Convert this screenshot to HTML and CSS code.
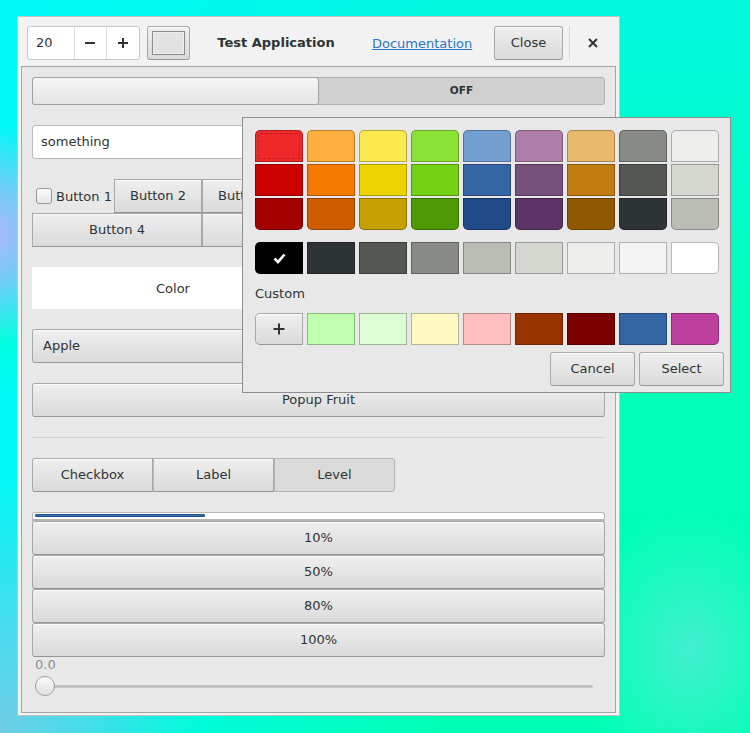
FILE: index.html
```html
<!DOCTYPE html>
<html>
<head>
<meta charset="utf-8">
<link rel="stylesheet" href="styles.css">
</head>
<body>
<div class="window">
  <header class="titlebar">
    <div class="spin">
      <span class="spin-val">20</span>
      <span class="spin-btn"><svg width="12" height="12" viewBox="0 0 12 12"><path d="M1 6h10" stroke="#2e3436" stroke-width="2"/></svg></span>
      <span class="spin-btn"><svg width="12" height="12" viewBox="0 0 12 12"><path d="M1 6h10M6 1v10" stroke="#2e3436" stroke-width="2"/></svg></span>
    </div>
    <div class="btn colorbtn"><span class="colorbtn-swatch"></span></div>
    <div class="title">Test Application</div>
    <span class="link">Documentation</span>
    <div class="btn closebtn">Close</div>
    <span class="hsep"></span>
    <span class="xbtn"><svg width="10" height="10" viewBox="0 0 10 10"><path d="M1 1l8 8M9 1l-8 8" stroke="#2e3436" stroke-width="2"/></svg></span>
  </header>
  <div class="frame">
    <div class="switch"><span class="switch-knob"></span><span class="switch-off">OFF</span></div>
    <div class="entry">something</div>
    <div class="bgrid">
      <label class="check"><span class="checkbox"></span>Button 1</label>
      <div class="btn">Button 2</div>
      <div class="btn">Button 3</div>
      <div class="btn">Button 6</div>
      <div class="btn span2">Button 4</div>
      <div class="btn span2">Button 5</div>
    </div>
    <div class="colorrow"><div class="colorband">Color</div></div>
    <div class="btn combo">Apple</div>
    <div class="btn popupbtn">Popup Fruit</div>
    <div class="separator"></div>
    <div class="segmented">
      <div class="btn seg">Checkbox</div>
      <div class="btn seg">Label</div>
      <div class="btn seg active">Level</div>
    </div>
    <div class="levels">
      <div class="progress"><div class="progress-fill"></div></div>
      <div class="btn lvl">10%</div>
      <div class="btn lvl">50%</div>
      <div class="btn lvl">80%</div>
      <div class="btn lvl">100%</div>
    </div>
    <div class="scale-label">0.0</div>
    <div class="scale"><span class="scale-knob"></span><span class="scale-trough"></span></div>
  </div>
</div>

<div class="popover">
  <div class="palette">
    <div class="col">
      <span class="sw focus" style="background:#ef2929"></span>
      <span class="sw" style="background:#cc0000"></span>
      <span class="sw" style="background:#a40000"></span>
    </div>
    <div class="col">
      <span class="sw" style="background:#fcaf3e"></span>
      <span class="sw" style="background:#f57900"></span>
      <span class="sw" style="background:#ce5c00"></span>
    </div>
    <div class="col">
      <span class="sw" style="background:#fce94f"></span>
      <span class="sw" style="background:#edd400"></span>
      <span class="sw" style="background:#c4a000"></span>
    </div>
    <div class="col">
      <span class="sw" style="background:#8ae234"></span>
      <span class="sw" style="background:#73d216"></span>
      <span class="sw" style="background:#4e9a06"></span>
    </div>
    <div class="col">
      <span class="sw" style="background:#729fcf"></span>
      <span class="sw" style="background:#3465a4"></span>
      <span class="sw" style="background:#204a87"></span>
    </div>
    <div class="col">
      <span class="sw" style="background:#ad7fa8"></span>
      <span class="sw" style="background:#75507b"></span>
      <span class="sw" style="background:#5c3566"></span>
    </div>
    <div class="col">
      <span class="sw" style="background:#e9b96e"></span>
      <span class="sw" style="background:#c17d11"></span>
      <span class="sw" style="background:#8f5902"></span>
    </div>
    <div class="col">
      <span class="sw" style="background:#888a85"></span>
      <span class="sw" style="background:#555753"></span>
      <span class="sw" style="background:#2e3436"></span>
    </div>
    <div class="col">
      <span class="sw" style="background:#eeeeec"></span>
      <span class="sw" style="background:#d3d7cf"></span>
      <span class="sw" style="background:#babdb6"></span>
    </div>
  </div>
  <div class="row grays">
    <span class="sw" style="background:#000000"><svg width="13" height="11" viewBox="0 0 13 11"><path d="M1.5 5.5l3.5 3.5 6.5-7.5" fill="none" stroke="#fff" stroke-width="2.6"/></svg></span>
    <span class="sw" style="background:#2e3436"></span>
    <span class="sw" style="background:#555753"></span>
    <span class="sw" style="background:#888a85"></span>
    <span class="sw" style="background:#babdb6"></span>
    <span class="sw" style="background:#d3d7cf"></span>
    <span class="sw" style="background:#eeeeec"></span>
    <span class="sw" style="background:#f3f3f3"></span>
    <span class="sw" style="background:#ffffff"></span>
  </div>
  <div class="custom-label">Custom</div>
  <div class="row customs">
    <span class="btn addbtn"><svg width="12" height="12" viewBox="0 0 12 12"><path d="M0.5 6h11M6 0.5v11" stroke="#2e3436" stroke-width="2"/></svg></span>
    <span class="sw" style="background:#c0ffb0"></span>
    <span class="sw" style="background:#ddfdd4"></span>
    <span class="sw" style="background:#fff8c0"></span>
    <span class="sw" style="background:#ffbfbf"></span>
    <span class="sw" style="background:#993300"></span>
    <span class="sw" style="background:#7d0000"></span>
    <span class="sw" style="background:#3465a4"></span>
    <span class="sw" style="background:#c040a0"></span>
  </div>
  <div class="pop-actions">
    <div class="btn actbtn">Cancel</div>
    <div class="btn actbtn">Select</div>
  </div>
</div>
</body>
</html>
```

FILE: styles.css
```css
* { box-sizing: border-box; }
html, body { margin: 0; height: 100%; }
body {
  font-family: "DejaVu Sans", sans-serif;
  font-size: 13px;
  color: #2e3436;
  position: relative;
  overflow: hidden;
  background:
    radial-gradient(ellipse 70px 110px at 0px 235px, #a8b8f8 0%, rgba(168,184,248,0.7) 40%, rgba(168,184,248,0) 100%),
    radial-gradient(ellipse 50px 60px at 0px 335px, #00ffdc, rgba(0,255,220,0)),
    radial-gradient(ellipse 200px 260px at 0px 733px, #70cce6 0%, rgba(112,204,230,0.6) 45%, rgba(112,204,230,0) 100%),
    radial-gradient(ellipse 110px 140px at 690px 650px, rgba(110,230,225,0.6), rgba(110,230,225,0)),
    linear-gradient(90deg, #00f8f8 0%, rgba(0,250,200,0) 60%),
    linear-gradient(180deg, #00f8e0 0%, #00ffb8 45%, #00ffb4 100%);
}

.window {
  margin: 16px 0 0 17px;
  width: 603px;
  height: 700px;
  border: 1px solid #c4c4c4;
  background: #f2f2f2;
  display: flex;
  flex-direction: column;
}

/* header */
.titlebar {
  height: 49px;
  display: flex;
  align-items: center;
  padding: 9px 0 6px 9px;
}
.spin {
  width: 113px;
  height: 34px;
  display: flex;
  background: #fff;
  border: 1px solid #c6c6c6;
  border-radius: 3px;
}
.spin-val {
  width: 46px;
  padding-left: 8px;
  line-height: 32px;
}
.spin-btn {
  width: 33px;
  border-left: 1px solid #dedede;
  display: flex;
  align-items: center;
  justify-content: center;
}
.btn {
  background: linear-gradient(#efefef, #dadada);
  border: 1px solid #a8a8a8;
  border-bottom-color: #969696;
  border-radius: 3px;
  box-shadow: inset 0 1px rgba(255,255,255,0.8);
  display: flex;
  align-items: center;
  justify-content: center;
  height: 34px;
  padding-bottom: 1px;
  white-space: nowrap;
  overflow: hidden;
}
.colorbtn {
  width: 43px;
  margin-left: 7px;
  padding: 4px;
}
.colorbtn-swatch {
  width: 33px;
  height: 24px;
  border: 1px solid #8a8a8a;
  background: #e2e2e2;
  box-shadow: inset 0 0 0 1px #efefef;
}
.title {
  width: 158px;
  margin-left: 7px;
  text-align: center;
  font-weight: bold;
  white-space: nowrap;
  padding-bottom: 1px;
}
.link {
  margin-left: 17px;
  width: 99px;
  color: #2a76c6;
  text-decoration: underline;
  white-space: nowrap;
}
.closebtn {
  width: 69px;
  margin-left: 23px;
}
.hsep {
  width: 1px;
  height: 34px;
  background: #d8d8d8;
  margin-left: 6px;
}
.xbtn {
  width: 18px;
  margin-left: 14px;
  display: flex;
  justify-content: center;
}

/* frame */
.frame {
  margin: 0 3px;
  height: 647px;
  border: 1px solid #a6a6a6;
  background: #e8e8e8;
  padding: 10px;
  display: flex;
  flex-direction: column;
}
.switch {
  height: 28px;
  border: 1px solid #b0b0b0;
  border-radius: 3px;
  background: #d0d0d0;
  display: flex;
}
.switch-knob {
  width: 287px;
  margin: -1px 0 -1px -1px;
  border: 1px solid #a0a0a0;
  border-radius: 3px;
  background: linear-gradient(#f6f6f6, #e4e4e4);
}
.switch-off {
  flex: 1;
  text-align: center;
  font-weight: bold;
  font-size: 10.5px;
  line-height: 25px;
  color: #2e3436;
}
.entry {
  margin-top: 20px;
  height: 34px;
  background: #fff;
  border: 1px solid #bcbcbc;
  border-radius: 3px;
  padding-left: 8px;
  line-height: 32px;
}
.bgrid {
  margin-top: 20px;
  display: grid;
  grid-template-columns: 82px 88px 88px 88px;
  grid-auto-rows: 34px;
}
.bgrid .btn { border-radius: 0; }
.span2 { grid-column: span 2; }
.check {
  display: flex;
  align-items: center;
  padding-left: 4px;
  gap: 4px;
}
.checkbox {
  width: 16px;
  height: 16px;
  border: 1px solid #999;
  border-radius: 3px;
  background: linear-gradient(#fafafa, #e6e6e6);
}
.colorrow {
  margin-top: 20px;
  display: flex;
}
.colorband {
  width: 282px;
  height: 42px;
  background: #fff;
  display: flex;
  align-items: center;
  justify-content: center;
}
.combo {
  margin-top: 20px;
  justify-content: flex-start;
  padding-left: 10px;
}
.popupbtn { margin-top: 20px; }
.separator {
  margin-top: 20px;
  height: 1px;
  background: #d2d2d2;
}
.segmented {
  margin-top: 20px;
  display: flex;
}
.seg {
  width: 121px;
  border-radius: 0;
}
.seg + .seg { border-left-color: #b8b8b8; }
.seg:first-child { border-radius: 3px 0 0 3px; }
.seg:last-child { border-radius: 0 3px 3px 0; }
.seg.active {
  background: #dadada;
  box-shadow: none;
  border-color: #b4b4b4;
}
.levels {
  margin-top: 20px;
  display: flex;
  flex-direction: column;
}
.progress {
  height: 9px;
  border: 1px solid #b8b8b8;
  border-bottom: 2px solid #b4b4b4;
  border-radius: 3px 3px 0 0;
  background: #fdfdfd;
  padding: 1px 2px;
}
.progress-fill {
  width: 30%;
  height: 3px;
  background: #3a6fb0;
  border: 1px solid #1f4e8f;
  border-radius: 1px;
}
.lvl { border-radius: 3px; }
.scale-label {
  line-height: 16px;
  color: #8e8e8e;
  padding-left: 3px;
}
.scale {
  margin-top: 3px;
  height: 20px;
  position: relative;
  display: flex;
  align-items: center;
  padding: 0 12px 0 3px;
}
.scale-trough {
  flex: 1;
  height: 3px;
  background: #c2c2c2;
  border-radius: 2px;
}
.scale-knob {
  position: absolute;
  left: 3px;
  top: 0;
  width: 20px;
  height: 20px;
  border-radius: 50%;
  border: 1px solid #a0a0a0;
  background: linear-gradient(#fbfbfb, #e0e0e0);
}

/* popover */
.popover {
  position: absolute;
  left: 242px;
  top: 117px;
  width: 489px;
  height: 276px;
  background: #e8e8e8;
  border: 1px solid #8e8e8e;
  padding: 12px 6px 6px 12px;
  display: flex;
  flex-direction: column;
}
.palette {
  display: flex;
  gap: 4px;
}
.col {
  display: flex;
  flex-direction: column;
  gap: 2px;
}
.sw {
  width: 48px;
  height: 32px;
  border: 1px solid rgba(0,0,0,0.28);
  display: flex;
  align-items: center;
  justify-content: center;
}
.col .sw:first-child { border-radius: 5px 5px 0 0; }
.col .sw:last-child { border-radius: 0 0 5px 5px; }
.focus {
  outline: 1px dashed rgba(0,0,0,0.22);
  outline-offset: -4px;
}
.row {
  display: flex;
  gap: 4px;
  width: 464px;
}
.grays { margin-top: 12px; }
.row > :first-child { border-radius: 5px 0 0 5px; }
.row > :last-child { border-radius: 0 5px 5px 0; }
.custom-label {
  margin-top: 12px;
  line-height: 16px;
}
.customs { margin-top: 11px; }
.addbtn {
  width: 48px;
  height: 32px;
}
.pop-actions {
  margin-top: 7px;
  display: flex;
  justify-content: flex-end;
  gap: 4px;
}
.actbtn { width: 85px; }
```
